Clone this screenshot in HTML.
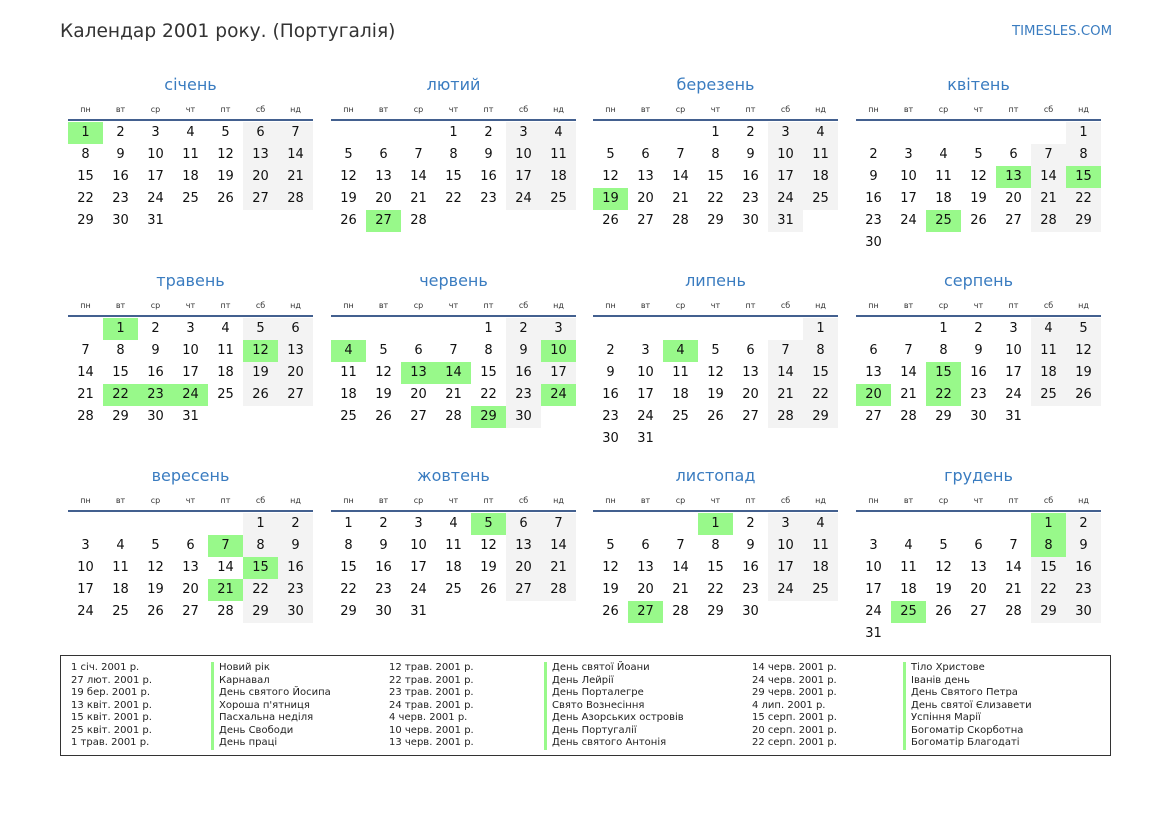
<!DOCTYPE html>
<html><head><meta charset="utf-8"><style>
*{margin:0;padding:0;box-sizing:border-box}
body{width:1169px;height:827px;background:#fff;position:relative;font-family:"DejaVu Sans","Liberation Sans",sans-serif;color:#111;overflow:hidden}
.t{position:absolute;left:60px;top:21px;font-size:18.6px;color:#333}
.logo{position:absolute;left:1012px;top:24px;font-size:13.3px;color:#3a7cc0}
.m{position:absolute;width:245px}
.m h2{font-weight:normal;font-size:16px;color:#3a7cc0;text-align:center;height:22px;line-height:22px;margin-bottom:9px}
.hd{display:grid;grid-template-columns:repeat(7,35px);font-size:8px;color:#333;text-align:center;height:16px;line-height:10px;border-bottom:2px solid #43608f}
.g{display:grid;grid-template-columns:repeat(7,35px);grid-auto-rows:22px;margin-top:1px;font-size:13px;text-align:center;line-height:22px}
.g b{font-weight:normal}
.g b:nth-child(7n+6):not(:empty),.g b:nth-child(7n):not(:empty){background:#f3f3f3}
.g b.h{background:#98f98a!important}
.lg{position:absolute;left:60px;top:655px;width:1051px;height:101px;border:1.5px solid #333;font-size:10px;line-height:12.5px;color:#222}
.c{position:absolute;top:6px}
.bar{border-left:3px solid #98f98a;padding-left:5px}
</style></head><body>
<div class="t">Календар 2001 року. (Португалія)</div>
<div class="logo">TIMESLES.COM</div>

<div class="m" style="left:68px;top:74px"><h2>січень</h2><div class="hd"><span>пн</span><span>вт</span><span>ср</span><span>чт</span><span>пт</span><span>сб</span><span>нд</span></div><div class="g"><b class="h">1</b><b>2</b><b>3</b><b>4</b><b>5</b><b>6</b><b>7</b><b>8</b><b>9</b><b>10</b><b>11</b><b>12</b><b>13</b><b>14</b><b>15</b><b>16</b><b>17</b><b>18</b><b>19</b><b>20</b><b>21</b><b>22</b><b>23</b><b>24</b><b>25</b><b>26</b><b>27</b><b>28</b><b>29</b><b>30</b><b>31</b></div></div>

<div class="m" style="left:331px;top:74px"><h2>лютий</h2><div class="hd"><span>пн</span><span>вт</span><span>ср</span><span>чт</span><span>пт</span><span>сб</span><span>нд</span></div><div class="g"><b></b><b></b><b></b><b>1</b><b>2</b><b>3</b><b>4</b><b>5</b><b>6</b><b>7</b><b>8</b><b>9</b><b>10</b><b>11</b><b>12</b><b>13</b><b>14</b><b>15</b><b>16</b><b>17</b><b>18</b><b>19</b><b>20</b><b>21</b><b>22</b><b>23</b><b>24</b><b>25</b><b>26</b><b class="h">27</b><b>28</b></div></div>

<div class="m" style="left:593px;top:74px"><h2>березень</h2><div class="hd"><span>пн</span><span>вт</span><span>ср</span><span>чт</span><span>пт</span><span>сб</span><span>нд</span></div><div class="g"><b></b><b></b><b></b><b>1</b><b>2</b><b>3</b><b>4</b><b>5</b><b>6</b><b>7</b><b>8</b><b>9</b><b>10</b><b>11</b><b>12</b><b>13</b><b>14</b><b>15</b><b>16</b><b>17</b><b>18</b><b class="h">19</b><b>20</b><b>21</b><b>22</b><b>23</b><b>24</b><b>25</b><b>26</b><b>27</b><b>28</b><b>29</b><b>30</b><b>31</b></div></div>

<div class="m" style="left:856px;top:74px"><h2>квітень</h2><div class="hd"><span>пн</span><span>вт</span><span>ср</span><span>чт</span><span>пт</span><span>сб</span><span>нд</span></div><div class="g"><b></b><b></b><b></b><b></b><b></b><b></b><b>1</b><b>2</b><b>3</b><b>4</b><b>5</b><b>6</b><b>7</b><b>8</b><b>9</b><b>10</b><b>11</b><b>12</b><b class="h">13</b><b>14</b><b class="h">15</b><b>16</b><b>17</b><b>18</b><b>19</b><b>20</b><b>21</b><b>22</b><b>23</b><b>24</b><b class="h">25</b><b>26</b><b>27</b><b>28</b><b>29</b><b>30</b></div></div>

<div class="m" style="left:68px;top:270px"><h2>травень</h2><div class="hd"><span>пн</span><span>вт</span><span>ср</span><span>чт</span><span>пт</span><span>сб</span><span>нд</span></div><div class="g"><b></b><b class="h">1</b><b>2</b><b>3</b><b>4</b><b>5</b><b>6</b><b>7</b><b>8</b><b>9</b><b>10</b><b>11</b><b class="h">12</b><b>13</b><b>14</b><b>15</b><b>16</b><b>17</b><b>18</b><b>19</b><b>20</b><b>21</b><b class="h">22</b><b class="h">23</b><b class="h">24</b><b>25</b><b>26</b><b>27</b><b>28</b><b>29</b><b>30</b><b>31</b></div></div>

<div class="m" style="left:331px;top:270px"><h2>червень</h2><div class="hd"><span>пн</span><span>вт</span><span>ср</span><span>чт</span><span>пт</span><span>сб</span><span>нд</span></div><div class="g"><b></b><b></b><b></b><b></b><b>1</b><b>2</b><b>3</b><b class="h">4</b><b>5</b><b>6</b><b>7</b><b>8</b><b>9</b><b class="h">10</b><b>11</b><b>12</b><b class="h">13</b><b class="h">14</b><b>15</b><b>16</b><b>17</b><b>18</b><b>19</b><b>20</b><b>21</b><b>22</b><b>23</b><b class="h">24</b><b>25</b><b>26</b><b>27</b><b>28</b><b class="h">29</b><b>30</b></div></div>

<div class="m" style="left:593px;top:270px"><h2>липень</h2><div class="hd"><span>пн</span><span>вт</span><span>ср</span><span>чт</span><span>пт</span><span>сб</span><span>нд</span></div><div class="g"><b></b><b></b><b></b><b></b><b></b><b></b><b>1</b><b>2</b><b>3</b><b class="h">4</b><b>5</b><b>6</b><b>7</b><b>8</b><b>9</b><b>10</b><b>11</b><b>12</b><b>13</b><b>14</b><b>15</b><b>16</b><b>17</b><b>18</b><b>19</b><b>20</b><b>21</b><b>22</b><b>23</b><b>24</b><b>25</b><b>26</b><b>27</b><b>28</b><b>29</b><b>30</b><b>31</b></div></div>

<div class="m" style="left:856px;top:270px"><h2>серпень</h2><div class="hd"><span>пн</span><span>вт</span><span>ср</span><span>чт</span><span>пт</span><span>сб</span><span>нд</span></div><div class="g"><b></b><b></b><b>1</b><b>2</b><b>3</b><b>4</b><b>5</b><b>6</b><b>7</b><b>8</b><b>9</b><b>10</b><b>11</b><b>12</b><b>13</b><b>14</b><b class="h">15</b><b>16</b><b>17</b><b>18</b><b>19</b><b class="h">20</b><b>21</b><b class="h">22</b><b>23</b><b>24</b><b>25</b><b>26</b><b>27</b><b>28</b><b>29</b><b>30</b><b>31</b></div></div>

<div class="m" style="left:68px;top:465px"><h2>вересень</h2><div class="hd"><span>пн</span><span>вт</span><span>ср</span><span>чт</span><span>пт</span><span>сб</span><span>нд</span></div><div class="g"><b></b><b></b><b></b><b></b><b></b><b>1</b><b>2</b><b>3</b><b>4</b><b>5</b><b>6</b><b class="h">7</b><b>8</b><b>9</b><b>10</b><b>11</b><b>12</b><b>13</b><b>14</b><b class="h">15</b><b>16</b><b>17</b><b>18</b><b>19</b><b>20</b><b class="h">21</b><b>22</b><b>23</b><b>24</b><b>25</b><b>26</b><b>27</b><b>28</b><b>29</b><b>30</b></div></div>

<div class="m" style="left:331px;top:465px"><h2>жовтень</h2><div class="hd"><span>пн</span><span>вт</span><span>ср</span><span>чт</span><span>пт</span><span>сб</span><span>нд</span></div><div class="g"><b>1</b><b>2</b><b>3</b><b>4</b><b class="h">5</b><b>6</b><b>7</b><b>8</b><b>9</b><b>10</b><b>11</b><b>12</b><b>13</b><b>14</b><b>15</b><b>16</b><b>17</b><b>18</b><b>19</b><b>20</b><b>21</b><b>22</b><b>23</b><b>24</b><b>25</b><b>26</b><b>27</b><b>28</b><b>29</b><b>30</b><b>31</b></div></div>

<div class="m" style="left:593px;top:465px"><h2>листопад</h2><div class="hd"><span>пн</span><span>вт</span><span>ср</span><span>чт</span><span>пт</span><span>сб</span><span>нд</span></div><div class="g"><b></b><b></b><b></b><b class="h">1</b><b>2</b><b>3</b><b>4</b><b>5</b><b>6</b><b>7</b><b>8</b><b>9</b><b>10</b><b>11</b><b>12</b><b>13</b><b>14</b><b>15</b><b>16</b><b>17</b><b>18</b><b>19</b><b>20</b><b>21</b><b>22</b><b>23</b><b>24</b><b>25</b><b>26</b><b class="h">27</b><b>28</b><b>29</b><b>30</b></div></div>

<div class="m" style="left:856px;top:465px"><h2>грудень</h2><div class="hd"><span>пн</span><span>вт</span><span>ср</span><span>чт</span><span>пт</span><span>сб</span><span>нд</span></div><div class="g"><b></b><b></b><b></b><b></b><b></b><b class="h">1</b><b>2</b><b>3</b><b>4</b><b>5</b><b>6</b><b>7</b><b class="h">8</b><b>9</b><b>10</b><b>11</b><b>12</b><b>13</b><b>14</b><b>15</b><b>16</b><b>17</b><b>18</b><b>19</b><b>20</b><b>21</b><b>22</b><b>23</b><b>24</b><b class="h">25</b><b>26</b><b>27</b><b>28</b><b>29</b><b>30</b><b>31</b></div></div>

<div class="lg">
<div class="c" style="left:10px">1 січ. 2001 р.<br>27 лют. 2001 р.<br>19 бер. 2001 р.<br>13 квіт. 2001 р.<br>15 квіт. 2001 р.<br>25 квіт. 2001 р.<br>1 трав. 2001 р.</div>
<div class="c bar" style="left:150px">Новий рік<br>Карнавал<br>День святого Йосипа<br>Хороша п'ятниця<br>Пасхальна неділя<br>День Свободи<br>День праці</div>
<div class="c" style="left:328px">12 трав. 2001 р.<br>22 трав. 2001 р.<br>23 трав. 2001 р.<br>24 трав. 2001 р.<br>4 черв. 2001 р.<br>10 черв. 2001 р.<br>13 черв. 2001 р.</div>
<div class="c bar" style="left:483px">День святої Йоани<br>День Лейрії<br>День Порталегре<br>Свято Вознесіння<br>День Азорських островів<br>День Португалії<br>День святого Антонія</div>
<div class="c" style="left:691px">14 черв. 2001 р.<br>24 черв. 2001 р.<br>29 черв. 2001 р.<br>4 лип. 2001 р.<br>15 серп. 2001 р.<br>20 серп. 2001 р.<br>22 серп. 2001 р.</div>
<div class="c bar" style="left:842px">Тіло Христове<br>Іванів день<br>День Святого Петра<br>День святої Єлизавети<br>Успіння Марії<br>Богоматір Скорботна<br>Богоматір Благодаті</div>
</div>
</body></html>
